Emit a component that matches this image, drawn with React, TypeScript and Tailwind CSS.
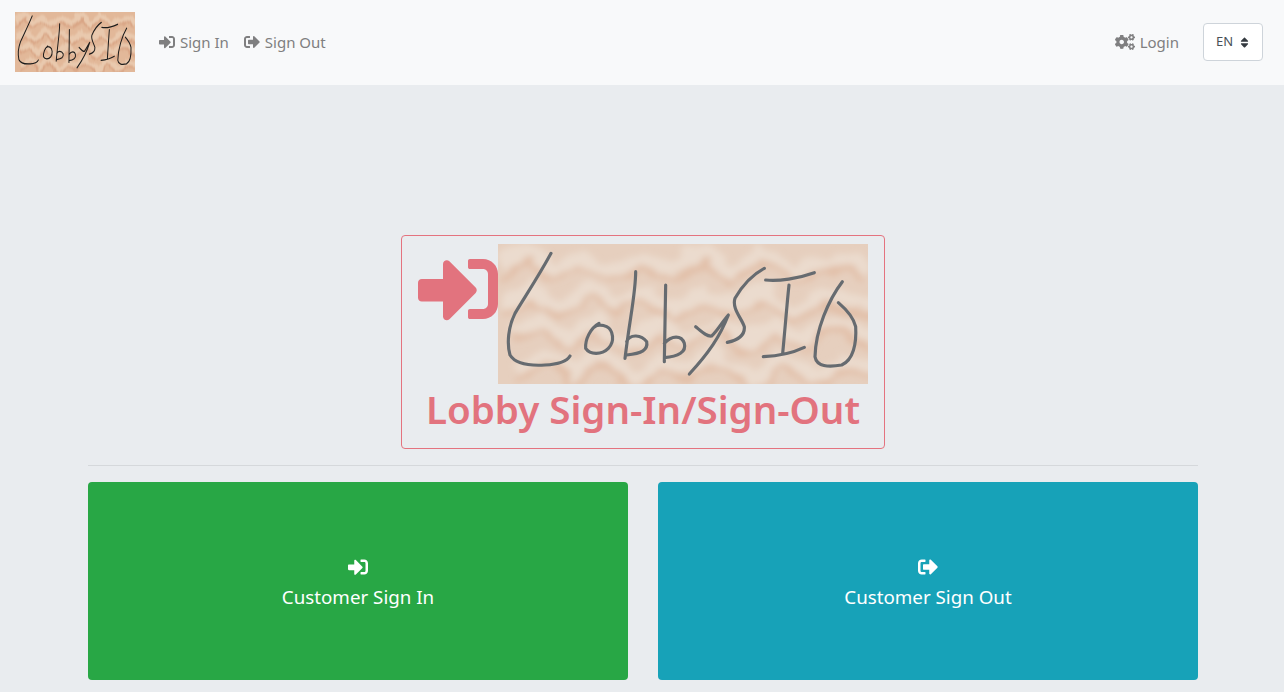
import { FaCogs, FaSignInAlt, FaSignOutAlt, FaSort } from "react-icons/fa";

const font = { fontFamily: '"Noto Sans", "Open Sans", sans-serif' };

const paperBands = [
  "M309 110 L400 70 L480 120 L560 80 L650 130 L740 70 L830 120 L920 75 L1010 125 L1100 70 L1190 120 L1280 75 L1419 120",
  "M309 210 L390 170 L470 225 L560 180 L640 230 L730 185 L820 235 L910 175 L1000 225 L1090 180 L1180 235 L1270 185 L1419 230",
  "M309 310 L400 270 L490 325 L570 280 L660 330 L750 275 L840 325 L930 280 L1020 335 L1110 285 L1200 330 L1290 280 L1419 325",
  "M309 415 L390 375 L480 425 L570 385 L650 435 L740 380 L830 430 L920 385 L1010 440 L1100 385 L1190 435 L1280 390 L1419 430",
];

function LobbyLogo({
  className,
  id,
  base,
  light,
  dark,
  ink,
  inkWidth,
  blur,
}: {
  className: string;
  id: string;
  base: string;
  light: string;
  dark: string;
  ink: string;
  inkWidth: number;
  blur: number;
}) {
  return (
    <svg
      className={className}
      viewBox="309 42 1110 420"
      preserveAspectRatio="none"
      role="img"
      aria-label="LobbySIO"
    >
      <defs>
        {/* crumpled paper: break up the zigzag bands with noise, then soften */}
        <filter id={id} x="-20%" y="-20%" width="140%" height="140%">
          <feTurbulence type="fractalNoise" baseFrequency="0.006 0.011" numOctaves="3" seed="7" result="noise" />
          <feDisplacementMap in="SourceGraphic" in2="noise" scale="90" xChannelSelector="R" yChannelSelector="G" />
          <feGaussianBlur stdDeviation={blur} />
        </filter>
        <clipPath id={`${id}-clip`}>
          <rect x="309" y="42" width="1110" height="420" />
        </clipPath>
      </defs>
      <rect x="309" y="42" width="1110" height="420" fill={base} />
      <g clipPath={`url(#${id}-clip)`}>
        <g filter={`url(#${id})`} fill="none">
          {paperBands.map((d, i) => (
            <g key={d}>
              <path d={d} stroke={light} strokeWidth="38" transform={`translate(${i * 18} 0)`} />
              <path d={d} stroke={dark} strokeWidth="15" transform={`translate(${i * 18} 34)`} />
            </g>
          ))}
        </g>
      </g>
      <g fill="none" stroke={ink} strokeWidth={inkWidth} strokeLinecap="round" strokeLinejoin="round">
        <path d="M468 70 C430 140 390 200 360 250 C340 290 335 340 345 375 C360 400 400 408 450 405 C490 403 515 395 525 378" />
        <path d="M612 280 C585 295 570 330 572 355 C585 375 620 375 640 355 C660 335 655 300 635 290 C620 283 605 285 600 290" />
        <path d="M722 125 C722 190 705 260 690 385 M695 335 C705 310 740 315 755 335 C760 360 740 370 695 375" />
        <path d="M812 165 L808 395 M808 340 C830 315 860 315 868 340 C875 365 850 380 808 383" />
        <path d="M902 290 C920 305 935 320 950 318 C970 300 985 270 1000 255 C975 320 940 370 883 432" />
        <path d="M1108 115 C1070 135 1040 170 1020 205 C1010 235 1040 265 1048 290 C1050 315 1030 330 997 337" />
        <path d="M1112 150 C1150 155 1210 145 1258 128 M1182 165 C1175 230 1170 300 1163 370 M1105 380 C1150 378 1190 370 1228 352" />
        <path d="M1342 155 C1300 210 1262 300 1260 380 C1265 410 1300 412 1340 405 C1375 390 1385 340 1382 290 C1375 260 1350 235 1330 218" />
      </g>
    </svg>
  );
}

export default function App() {
  return (
    <div className="min-h-[692px] bg-[#e9ecef]" style={font}>
      <nav className="flex h-[85px] items-center bg-[#f8f9fa] pb-[1px] pl-[15px] pr-[21px] text-[15px] text-[#7f7f80]">
        <LobbyLogo
          className="h-[60px] w-[120px] shrink-0"
          id="logo-small"
          base="#e2b899"
          light="#e9c9ae"
          dark="#d9a585"
          ink="#1b1b1b"
          inkWidth={9}
          blur={7}
        />
        <a href="#" className="ml-[24px] flex items-center gap-[5px]">
          <FaSignInAlt className="text-[16px]" />
          <span>Sign In</span>
        </a>
        <a href="#" className="ml-[15px] flex items-center gap-[5px]">
          <FaSignOutAlt className="text-[16px]" />
          <span>Sign Out</span>
        </a>
        <a href="#" className="ml-auto flex items-center gap-[5px]">
          <FaCogs className="text-[20px]" />
          <span>Login</span>
        </a>
        <div className="ml-[24px] flex h-[38px] w-[60px] items-center justify-between rounded-[4px] border border-[#ced4da] bg-white pl-[12px] pr-[11px] text-[13px] text-[#495057]">
          <span>EN</span>
          <FaSort className="text-[13px] text-[#343a40]" />
        </div>
      </nav>

      <main className="pl-[88px] pt-[150px]">
        <div className="w-[1110px]">
          <div className="flex justify-center">
            <div className="w-[484px] rounded-[4px] border border-[#e4737f] px-[16px] pt-[8px] text-center">
              <div className="flex items-start">
                <FaSignInAlt className="mt-[5px] h-[80px] w-[80px] text-[#e2737e]" />
                <LobbyLogo
                  className="h-[140px] w-[370px] shrink-0"
                  id="logo-large"
                  base="#e6cfbe"
                  light="#ebdbce"
                  dark="#e2bfa8"
                  ink="#666b70"
                  inkWidth={9.5}
                  blur={9}
                />
              </div>
              <h1 className="-mx-[16px] h-[64px] whitespace-nowrap text-[38.5px] font-semibold leading-[50px] text-[#e2737e]">
                Lobby Sign-In/Sign-Out
              </h1>
            </div>
          </div>
          <hr className="mt-[16px] border-t border-[#d5d8db]" />
          <div className="mt-[16px] grid grid-cols-2 gap-[30px]">
            <a
              href="#"
              className="flex h-[198px] flex-col items-center justify-center rounded-[4px] bg-[#28a745] pt-[6px] text-[18.75px] text-white"
            >
              <FaSignInAlt className="text-[20px]" />
              <span className="mt-[6px]">Customer Sign In</span>
            </a>
            <a
              href="#"
              className="flex h-[198px] flex-col items-center justify-center rounded-[4px] bg-[#17a2b8] pt-[6px] text-[18.75px] text-white"
            >
              <FaSignOutAlt className="text-[20px]" />
              <span className="mt-[6px]">Customer Sign Out</span>
            </a>
          </div>
        </div>
      </main>
    </div>
  );
}
